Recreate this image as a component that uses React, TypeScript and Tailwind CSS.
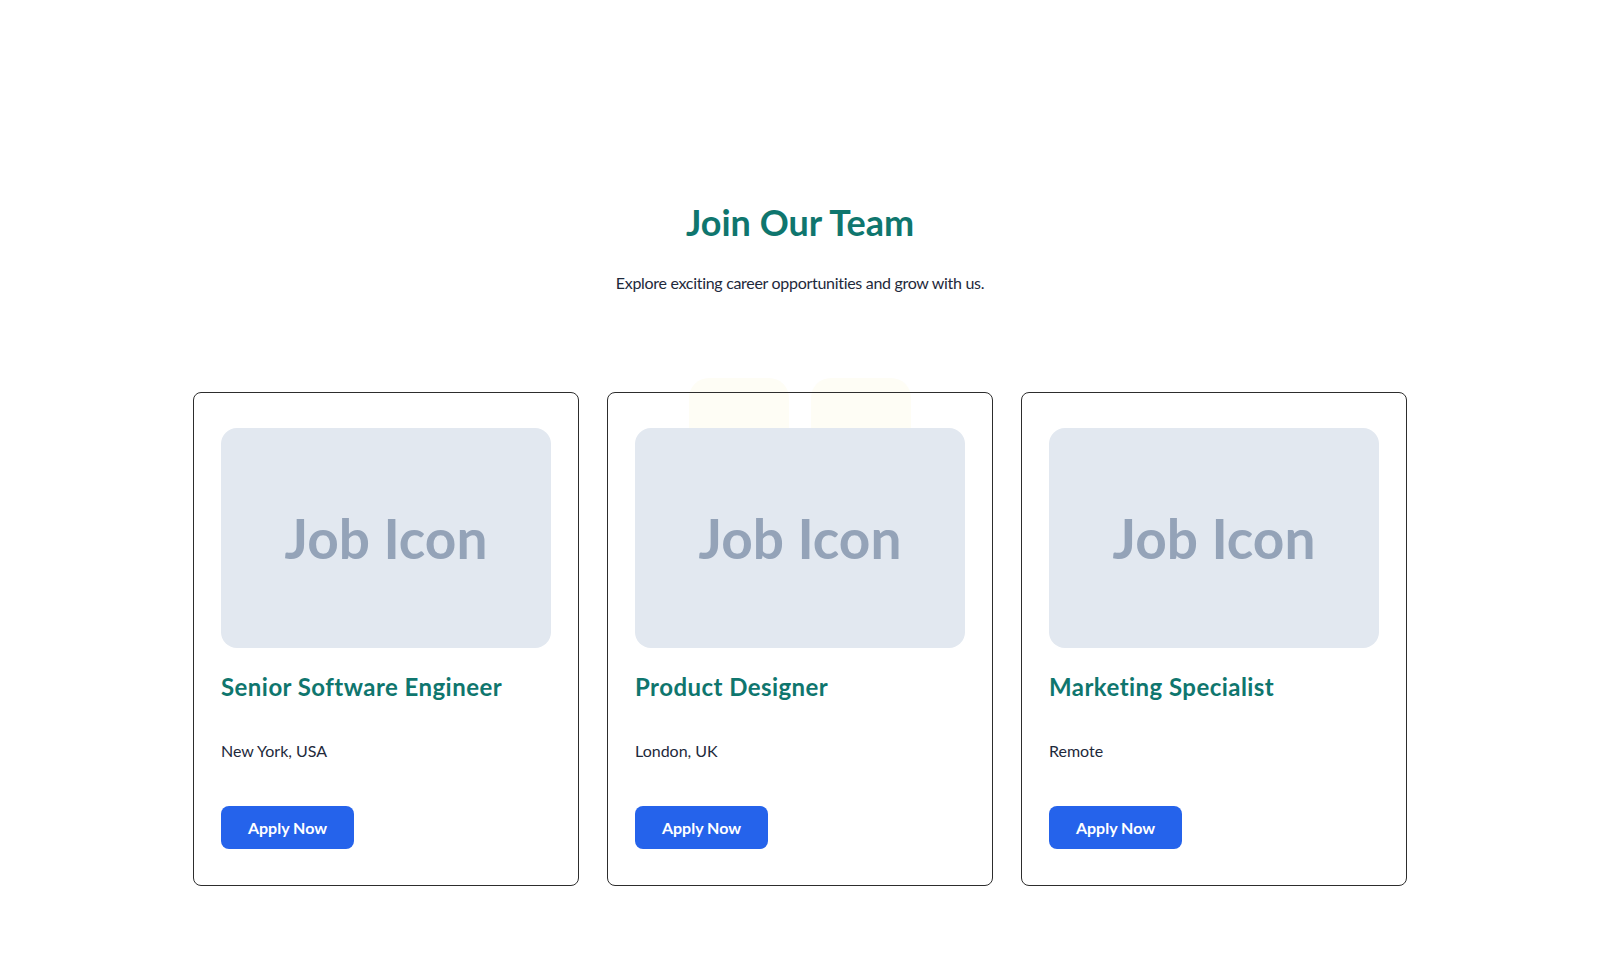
import React from "react";

const jobs = [
  { title: "Senior Software Engineer", location: "New York, USA" },
  { title: "Product Designer", location: "London, UK" },
  { title: "Marketing Specialist", location: "Remote" },
];

export default function App() {
  return (
    <div className="min-h-[978px] w-full bg-white font-['Lato',sans-serif]">
      <section className="mx-auto max-w-7xl px-[33px] pt-[202px] pb-[93px]">
        <h2 className="text-center text-[36px] leading-[40px] font-bold text-[#0f766e]">
          Join Our Team
        </h2>
        <p className="mt-[29px] text-center text-[16px] leading-6 tracking-[-0.3px] text-[#1e293b]">
          Explore exciting career opportunities and grow with us.
        </p>
        <div className="relative mt-[97px]">
          <div className="absolute left-[496px] top-[-14px] h-[160px] w-[100px] rounded-[20px] bg-[#fefdf5]" />
          <div className="absolute left-[618px] top-[-14px] h-[160px] w-[100px] rounded-[20px] bg-[#fefdf5]" />
          <div className="relative grid grid-cols-3 gap-7">
            {jobs.map((job) => (
              <div
                key={job.title}
                className="rounded-lg border border-[#2d2d2d] px-[27px] pt-[35px] pb-[36px]"
              >
                <div className="flex h-[220px] items-center justify-center rounded-2xl bg-[#e2e8f0]">
                  <span className="text-[55px] font-bold leading-none text-[#94a3b8]">
                    Job Icon
                  </span>
                </div>
                <h3 className="mt-[23px] text-[24px] leading-8 font-bold tracking-[0.45px] text-[#0f766e]">
                  {job.title}
                </h3>
                <p className="mt-[36px] text-[16px] leading-6 text-[#1e293b]">
                  {job.location}
                </p>
                <button className="mt-[43px] flex h-[43px] w-[133px] items-center justify-center rounded-lg bg-[#2563eb] text-[16px] font-bold text-white">
                  Apply Now
                </button>
              </div>
            ))}
          </div>
        </div>
      </section>
    </div>
  );
}
